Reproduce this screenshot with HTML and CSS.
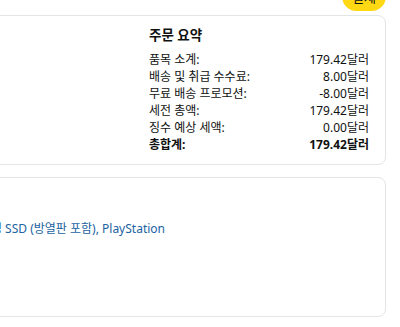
FILE: index.html
```html
<!DOCTYPE html>
<html lang="ko">
<head>
  <meta charset="UTF-8" />
  <meta name="viewport" content="width=device-width, initial-scale=1.0"/>
  <title>주문 요약</title>
  <link rel="stylesheet" href="styles.css">
</head>
<body>

  <div class="page">
    <div class="top-bar">
      <button class="pay-btn">결제</button>
    </div>

    <!-- 주문 요약 카드 -->
    <div class="card summary-card">
      <div class="summary">
        <h3>주문 요약</h3>
        <div class="row"><span>품목 소계:</span><span>179.42달러</span></div>
        <div class="row"><span>배송 및 취급 수수료:</span><span>8.00달러</span></div>
        <div class="row"><span>무료 배송 프로모션:</span><span>-8.00달러</span></div>
        <div class="row"><span>세전 총액:</span><span>179.42달러</span></div>
        <div class="row"><span>징수 예상 세액:</span><span>0.00달러</span></div>
        <div class="row total"><span>총합계:</span><span>179.42달러</span></div>
      </div>
    </div>

    <!-- 상품 카드 -->
    <div class="card item-card">
      <div class="item-title">
        <a href="#">삼성 990 PRO 2TB 내장 게이밍 SSD (방열판 포함), PlayStation</a>
      </div>
    </div>
  </div>

</body>
</html>
```

FILE: styles.css
```css
body {
  margin: 0;
  padding: 0;
  background: #ffffff;
  color: #0f1111;
  font-family: 'Noto Sans', 'Noto Sans CJK KR', sans-serif;
  overflow: hidden;
}

.page {
  width: 700px;
  margin-left: -314px;
  display: flex;
  flex-direction: column;
}

.top-bar {
  display: flex;
  justify-content: flex-end;
  height: 15px;
}

.pay-btn {
  margin-top: -18px;
  height: 29px;
  padding: 0 10px;
  background: #ffd814;
  border: none;
  border-radius: 15px;
  font-family: 'Noto Sans CJK KR', sans-serif;
  font-size: 13px;
  color: #0f1111;
  align-self: flex-start;
}

.card {
  border: 1px solid #e3e6e6;
  border-radius: 8px;
  box-sizing: border-box;
}

.summary-card {
  height: 150px;
  display: flex;
  justify-content: flex-end;
  padding: 8px 16px 0 0;
}

.summary {
  width: 220px;
}

.summary h3 {
  margin: 0 0 5px;
  font-size: 13.5px;
  font-weight: 700;
  line-height: 22px;
}

.row {
  display: flex;
  justify-content: space-between;
  font-size: 12px;
  line-height: 17px;
}

.row.total {
  font-weight: 700;
}

.item-card {
  margin-top: 12px;
  height: 140px;
  padding-top: 41px;
}

.item-title {
  width: 478px;
  text-align: right;
  white-space: nowrap;
  overflow: hidden;
  font-size: 12px;
  line-height: 20px;
}

.item-title a {
  color: #2162a1;
  text-decoration: none;
}
```
